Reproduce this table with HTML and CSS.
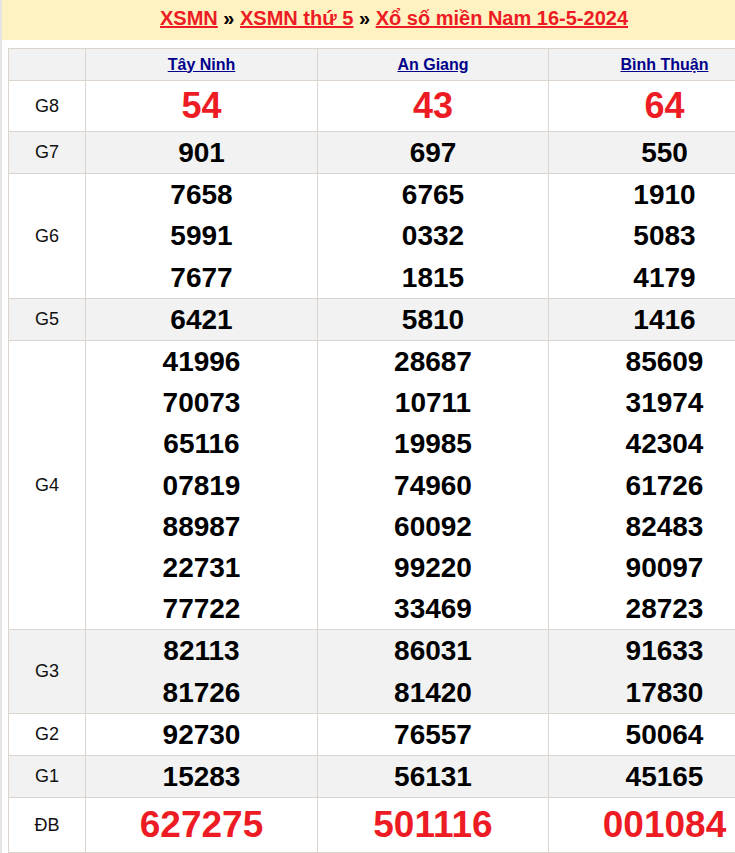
FILE: index.html
```html
<!DOCTYPE html>
<html lang="vi">
<head>
<meta charset="utf-8">
<title>XSMN 16-5-2024</title>
<link rel="stylesheet" href="styles.css">
</head>
<body>
<div class="viewport">
<div class="page">
  <h1 class="title"><a href="#">XSMN</a> » <a href="#">XSMN thứ 5</a> » <a href="#">Xổ số miền Nam 16-5-2024</a></h1>
  <table class="kq">
    <colgroup><col class="c0"><col class="c1"><col class="c2"><col class="c3"></colgroup>
    <thead>
      <tr class="alt"><th></th><th><a href="#">Tây Ninh</a></th><th><a href="#">An Giang</a></th><th><a href="#">Bình Thuận</a></th></tr>
    </thead>
    <tbody>
      <tr class="big"><td class="lbl">G8</td><td><div class="n red">54</div></td><td><div class="n red">43</div></td><td><div class="n red">64</div></td></tr>
      <tr class="alt"><td class="lbl">G7</td><td><div class="n">901</div></td><td><div class="n">697</div></td><td><div class="n">550</div></td></tr>
      <tr><td class="lbl">G6</td>
        <td><div class="n">7658</div><div class="n">5991</div><div class="n">7677</div></td>
        <td><div class="n">6765</div><div class="n">0332</div><div class="n">1815</div></td>
        <td><div class="n">1910</div><div class="n">5083</div><div class="n">4179</div></td></tr>
      <tr class="alt"><td class="lbl">G5</td><td><div class="n">6421</div></td><td><div class="n">5810</div></td><td><div class="n">1416</div></td></tr>
      <tr><td class="lbl">G4</td>
        <td><div class="n">41996</div><div class="n">70073</div><div class="n">65116</div><div class="n">07819</div><div class="n">88987</div><div class="n">22731</div><div class="n">77722</div></td>
        <td><div class="n">28687</div><div class="n">10711</div><div class="n">19985</div><div class="n">74960</div><div class="n">60092</div><div class="n">99220</div><div class="n">33469</div></td>
        <td><div class="n">85609</div><div class="n">31974</div><div class="n">42304</div><div class="n">61726</div><div class="n">82483</div><div class="n">90097</div><div class="n">28723</div></td></tr>
      <tr class="alt"><td class="lbl">G3</td>
        <td><div class="n">82113</div><div class="n">81726</div></td>
        <td><div class="n">86031</div><div class="n">81420</div></td>
        <td><div class="n">91633</div><div class="n">17830</div></td></tr>
      <tr><td class="lbl">G2</td><td><div class="n">92730</div></td><td><div class="n">76557</div></td><td><div class="n">50064</div></td></tr>
      <tr class="alt"><td class="lbl">G1</td><td><div class="n">15283</div></td><td><div class="n">56131</div></td><td><div class="n">45165</div></td></tr>
      <tr class="big"><td class="lbl">ĐB</td><td><div class="n red db">627275</div></td><td><div class="n red db">501116</div></td><td><div class="n red db">001084</div></td></tr>
    </tbody>
  </table>
</div>
</div>
</body>
</html>
```
FILE: styles.css
```css
html, body {
  margin: 0;
  padding: 0;
  overflow: hidden;
  background: #ffffff;
  font-family: "Liberation Sans", Arial, sans-serif;
}
.viewport {
  width: 735px;
  overflow: hidden;
}
.page {
  width: 784px;
  border-left: 2px solid #e4e4e4;
  padding-bottom: 20px;
}
.title {
  margin: 0;
  background: #fff2c2;
  text-align: center;
  font-size: 20px;
  font-weight: bold;
  line-height: 24px;
  padding: 6px 0 10px;
  color: #000;
}
.title a {
  color: #ed1c24;
  text-decoration: underline;
}
.kq {
  margin: 8px 6px 0;
  width: 772px;
  border-collapse: collapse;
  table-layout: fixed;
}
.c0 { width: 77px; }
.c1 { width: 232px; }
.c2 { width: 231px; }
.c3 { width: 232px; }
.kq th, .kq td {
  border: 1px solid #dcd5ce;
  padding: 0;
  text-align: center;
  vertical-align: middle;
}
.kq th {
  height: 31px;
  font-size: 16px;
  font-weight: bold;
}
.kq th a {
  color: #00008b;
  text-decoration: underline;
}
.alt { background: #f2f2f2; }
.lbl {
  font-size: 18px;
  color: #111;
}
.n {
  font-size: 28px;
  font-weight: bold;
  line-height: 41.2px;
  color: #000;
}
.big .n {
  line-height: 50px;
  font-size: 36px;
}
.big .db {
  font-size: 37px;
  line-height: 54px;
}
.red { color: #ed1c24; }
```
